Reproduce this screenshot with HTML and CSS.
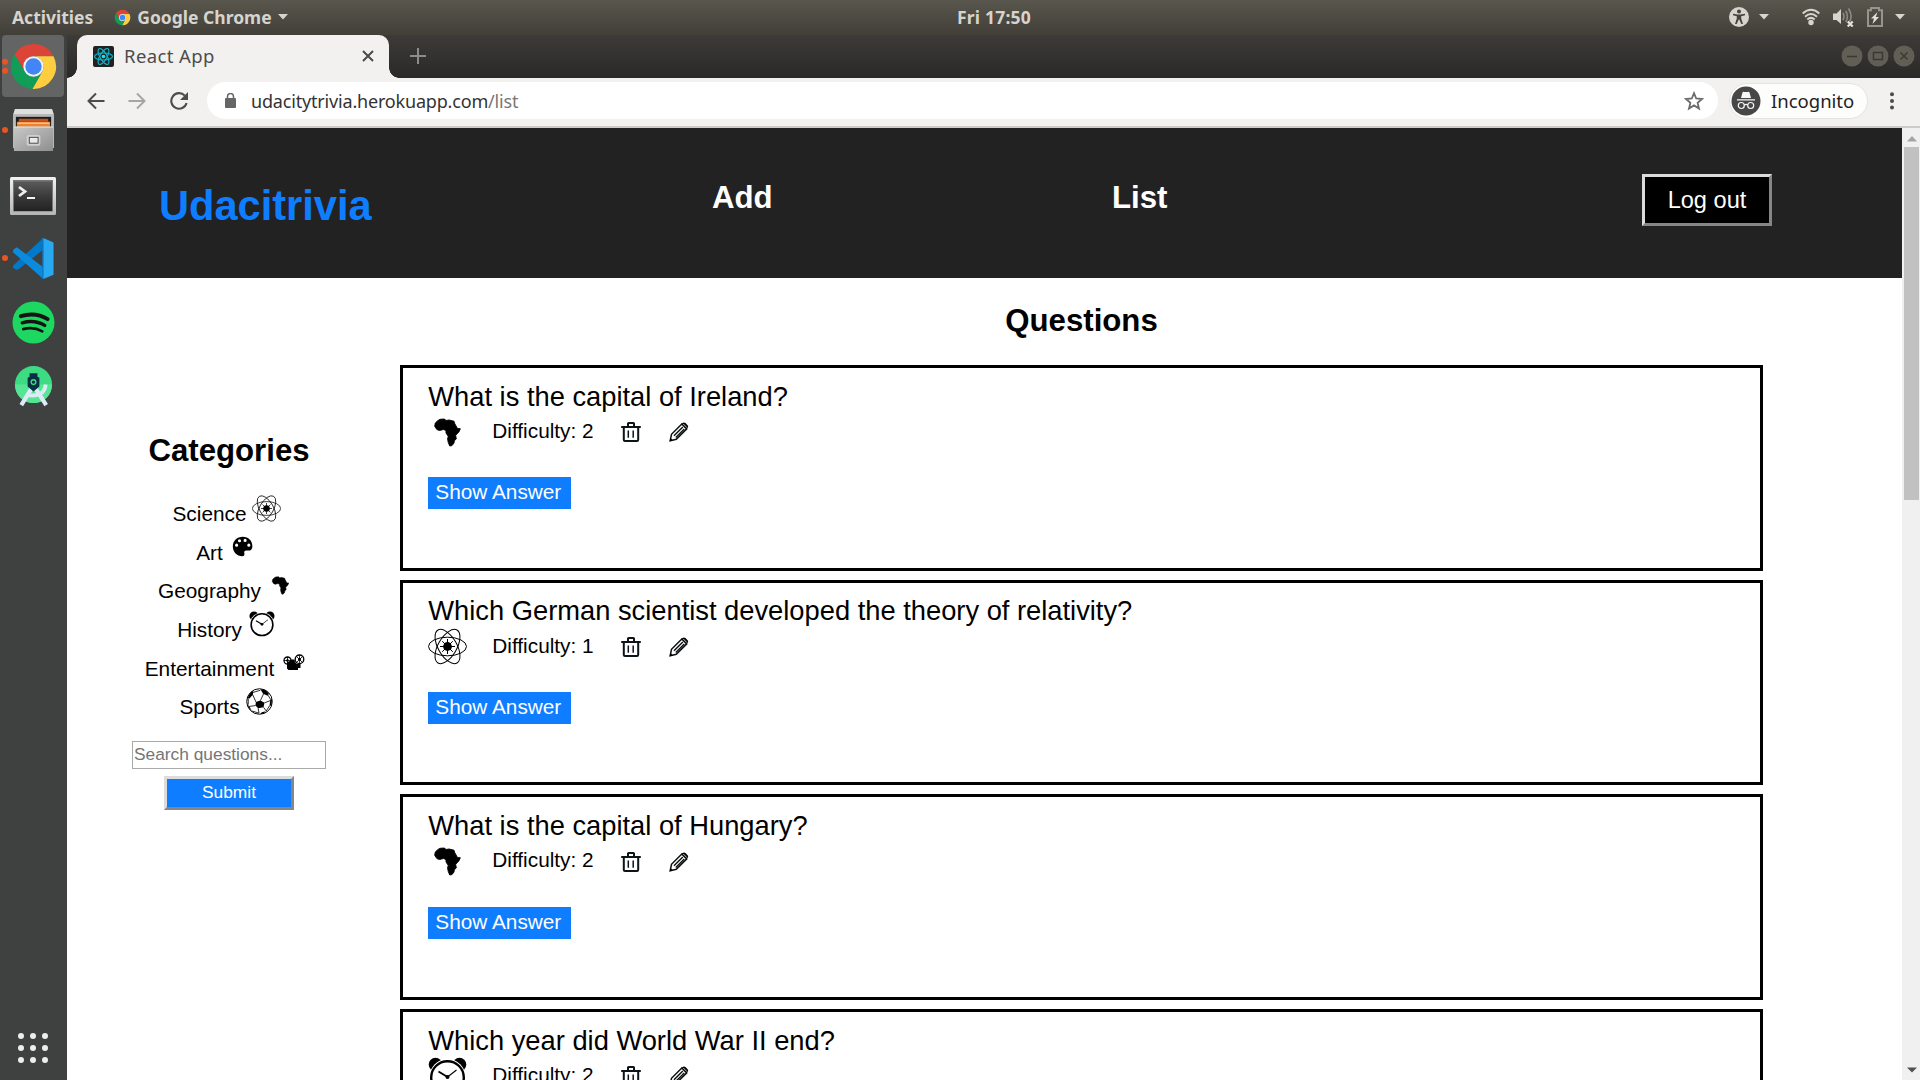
FILE: index.html
```html
<!DOCTYPE html>
<html lang="en">
<head>
<meta charset="utf-8">
<title>React App</title>
<link rel="stylesheet" href="styles.css">
</head>
<body>
<svg class="sprite" aria-hidden="true">
  <defs>
    <linearGradient id="steel" x1="0" y1="0" x2="1" y2="1"><stop offset="0" stop-color="#c9c9c9"/><stop offset="1" stop-color="#8e8e8e"/></linearGradient>
    <linearGradient id="screen" x1="0" y1="0" x2="0" y2="1"><stop offset="0" stop-color="#5a5a5a"/><stop offset=".5" stop-color="#3a3a3a"/><stop offset="1" stop-color="#222"/></linearGradient>
    <linearGradient id="frame" x1="0" y1="0" x2="0" y2="1"><stop offset="0" stop-color="#f2f2f2"/><stop offset="1" stop-color="#b5b5b5"/></linearGradient>
  </defs>
  <symbol id="chrome" viewBox="0 0 48 48">
    <path fill="#db4437" d="M5.54 12.03A22 22 0 0 1 43.6 14H24A10 10 0 0 0 15.34 29Z"/>
    <path fill="#ffcd40" d="M43.6 14A22 22 0 0 1 22.86 45.97L32.66 29A10 10 0 0 0 24 14Z"/>
    <path fill="#0f9d58" d="M22.86 45.97A22 22 0 0 1 5.54 12.03L15.34 29A10 10 0 0 0 32.66 29Z"/>
    <circle cx="24" cy="24" r="10" fill="#f1f1f1"/><circle cx="24" cy="24" r="8" fill="#4285f4"/>
  </symbol>
  <symbol id="caret" viewBox="0 0 10 6"><path fill="#d6d4ce" d="M0 0H10L5 5.5Z"/></symbol>
  <symbol id="atom" viewBox="0 0 39 39">
    <g fill="none" stroke="#000" stroke-width="1">
      <ellipse cx="19.5" cy="19.5" rx="19" ry="9.3"/>
      <ellipse cx="19.5" cy="19.5" rx="19" ry="9.3" transform="rotate(60 19.5 19.5)"/>
      <ellipse cx="19.5" cy="19.5" rx="19" ry="9.3" transform="rotate(120 19.5 19.5)"/>
      <path d="M19.5 12v15M12 19.500h15M14.200 14.200l10.600 10.600M14.200 24.800l10.600-10.600"/>
    </g>
    <circle cx="19.5" cy="19.5" r="4.4"/>
  </symbol>
  <symbol id="palette" viewBox="0 0 39 39">
    <path fill-rule="evenodd" d="M20 6.5C12 6.500 6.500 12 6.500 19.500C6.500 27 12 32.500 19 32.500C22 32.500 22.500 31 22 29C21.400 26.500 22 25 25 25H27.500C31 25 32.800 22.500 32.800 19C32.800 12 27.500 6.500 20 6.500ZM11.600 15.600a2.100 2.100 0 1 1 0 4.200a2.100 2.100 0 1 1 0-4.200ZM15.500 9.600a2.100 2.100 0 1 1 0 4.200a2.100 2.100 0 1 1 0-4.200ZM23 9.200a2.100 2.100 0 1 1 0 4.200a2.100 2.100 0 1 1 0-4.200ZM28 15.600a2.100 2.100 0 1 1 0 4.200a2.100 2.100 0 1 1 0-4.200Z"/>
  </symbol>
  <symbol id="africa" viewBox="0 0 39 39">
    <path stroke="#000" stroke-width=".9" stroke-linejoin="round" d="M12 6.300L16.500 6L18 7.500L21 7L26 8.200L26.800 10.800L29.500 15.500L32.300 15.700L31 18.800L27.700 22.300L28.300 26L26.300 27.700L26 30L24 32.600L21.700 33L20.200 29.300L19.600 26L20.200 23.300L18 20V17.600L15.500 16.500L11.500 17.500L8.900 16.600L6.700 13.300L7.300 10L9.700 7.700Z"/>
  </symbol>
  <symbol id="clock" viewBox="0 0 39 39">
    <circle cx="7.500" cy="7.500" r="6.800"/><circle cx="31.500" cy="7.500" r="6.800"/>
    <circle cx="19.500" cy="20" r="18" fill="#fff"/>
    <circle cx="19.500" cy="20.500" r="16.300" fill="#fff" stroke="#000" stroke-width="2.400"/>
    <path d="M10.500 14.500L19.500 20" fill="none" stroke="#000" stroke-width="1.900"/>
    <path d="M28.500 13L19.500 20" fill="none" stroke="#000" stroke-width="1.100"/>
    <circle cx="19.500" cy="20" r="2"/>
  </symbol>
  <symbol id="camera" viewBox="0 0 22 17">
    <circle cx="4.500" cy="6.500" r="3.500" fill="#fff" stroke="#000" stroke-width="1.300"/>
    <circle cx="16.500" cy="5.300" r="4.300" fill="#fff" stroke="#000" stroke-width="1.300"/>
    <path stroke="#000" stroke-width=".8" d="M4.500 3v7M1 6.500h7M16.500 1.300v8M13.500 2.500l6 6M19.500 2.500l-6 6"/>
    <circle cx="4.500" cy="6.500" r="1.300"/><circle cx="16.500" cy="5.300" r="1.500"/>
    <path d="M4 8.500L6 7.500L8.500 5.500H11.500L12 8L14 10H17.500V14H15V16H5.500L4 14.500Z"/>
  </symbol>
  <symbol id="ball" viewBox="0 0 30 30">
    <circle cx="15" cy="15" r="14.200" fill="#fff" stroke="#000" stroke-width="1.100"/>
    <path d="M11 15.500L16 14L20.500 16.500L19.500 21.500L13.500 22.500L10.500 19.500Z"/>
    <path d="M16 1.500L22 2.500L25.500 6.500L24 8.500L19 6.500ZM2 11C2.800 7.500 5 4.500 8 3L7.700 7.500L3.500 12ZM27 13L29 12.500L28.300 19L26 20.500ZM1.500 18.500L3.500 20L6.500 25.500L3.500 22.500ZM17.500 27L22 25.800L19.500 28.500L16 28.800Z"/>
    <path fill="none" stroke="#000" stroke-width=".9" d="M16 14L19.500 6.500M20.500 16.500L27 14M11 15.500L7.500 7.500M7.500 5L16 2.500M10.500 19.500L3.500 20.500M13.500 22.500L14.500 28M19.500 21.500L22.500 25.500M2.500 12L2.500 18.500M24.500 8L27.500 13M6.500 25.500L14.500 28M26 20L22.500 25.500"/>
  </symbol>
  <symbol id="trash" viewBox="0 0 20 20">
    <path fill="none" stroke="#0c1418" stroke-width="2" d="M.2 4.900H19.800M7 4.500V1.600Q7 1 7.600 1H12.400Q13 1 13 1.600V4.500M2.800 5V17.800Q2.800 19 4 19H16Q17.200 19 17.200 17.800V5"/>
    <path stroke="#0c1418" stroke-width="1.500" d="M7.300 8.500V15.800M12.200 8.500V15.800"/>
  </symbol>
  <symbol id="pencil" viewBox="0 0 20 20">
    <path fill="none" stroke="#0c1010" stroke-width="1.500" d="M1.200 18.700L2.500 12.300L12.800 2L17.700 6.900L7.300 17.200Z"/>
    <path fill="none" stroke="#0c1010" stroke-width="1.400" d="M5 13.800L13.800 5M6.800 15.400L15.300 6.900"/>
    <path d="M.7 19.200L1.300 15.800L4.100 18.600ZM13.200 1.300Q14.800-.2 16.500 1L18.800 3.400Q19.800 5 18.300 6.300L17.600 7L12.600 2Z"/>
    <path stroke="#fff" stroke-width=".8" d="M14.300 2L17.900 5.600"/>
  </symbol>
</svg>

<div class="desktop">
  <div class="topbar">
    <div class="topbar-left">
      <span class="activities">Activities</span>
      <svg class="topbar-logo"><use href="#chrome"/></svg>
      <span class="app-name">Google Chrome</span>
      <svg class="caret"><use href="#caret"/></svg>
    </div>
    <span class="time">Fri 17:50</span>
    <div class="topbar-right">
      <svg class="access" viewBox="0 0 20 20"><circle cx="10" cy="10" r="10" fill="#d6d4ce"/><circle cx="10" cy="4.600" r="2" fill="#45433c"/><path fill="#45433c" d="M4 6.800L8.500 7.400H11.500L16 6.800V8.300L12.200 9.200V11.500L14 17H12.300L10.300 12.500H9.700L7.700 17H6L7.800 11.500V9.200L4 8.300Z"/></svg>
      <svg class="caret"><use href="#caret"/></svg>
      <svg class="wifi" viewBox="0 0 18 18"><g fill="none" stroke="#d6d4ce" stroke-width="2"><path d="M.7 5.500Q9-2 17.300 5.500"/><path d="M3 8.700Q9 3.200 15 8.700"/><path d="M5.300 11.500Q9 8.300 12.700 11.500"/></g><circle cx="9" cy="14.500" r="2.700" fill="#d6d4ce"/></svg>
      <svg class="volume" viewBox="0 0 21 20"><path fill="#d6d4ce" d="M0 6.500H3.500L8 2V17L3.500 13H0Z"/><g fill="none" stroke="#8c8a83" stroke-width="1.600"><path d="M10 6Q12 9.500 10 13M12.800 4Q16 9.500 12.800 15M15.500 1.500Q20.500 9.500 16 15"/></g><path stroke="#e4e2dc" stroke-width="2.200" d="M14.700 14.500L19.700 19.500M19.700 14.500L14.700 19.500"/></svg>
      <svg class="battery" viewBox="0 0 16 20"><path fill="none" stroke="#96948d" stroke-width="2" d="M1 3.200H4V1H12V3.200H15V19H1Z"/><path fill="#e4e2dc" d="M10.500 5L4 11.500H7L5.500 17L12 10H8.800Z"/></svg>
      <svg class="caret"><use href="#caret"/></svg>
    </div>
  </div>

  <div class="workspace">
    <nav class="dock">
      <div class="dock-item active"><span class="dots"><i></i><i></i></span><svg class="dock-chrome"><use href="#chrome"/></svg></div>
      <div class="dock-item"><span class="dots"><i></i></span>
        <svg class="dock-icon" viewBox="0 0 44 44"><path fill="#b9b9b9" d="M3 1H41L43 6V40H1V6Z"/><path fill="#dedede" d="M3 0H41L42.500 5H1.500Z"/><rect x="4" y="8" width="36" height="12" fill="#1d1d1d"/><path fill="#c8501e" d="M7 10H37V13H7Z"/><path fill="#f0822d" d="M5 13H39V19H5Z"/><path stroke="#fbe3c0" d="M6 14.500H38"/><rect x="2" y="18" width="40" height="25" fill="url(#steel)"/><path stroke="#e6e6e6" d="M2 18.500H42"/><rect x="15" y="26.500" width="14" height="11" rx="2" fill="#d0d0d0"/><rect x="17.700" y="29" width="9" height="6" fill="#e9e9e9" stroke="#4a4a4a"/></svg></div>
      <div class="dock-item">
        <svg class="dock-terminal" viewBox="0 0 46 38"><rect width="46" height="38" rx="1.500" fill="url(#frame)"/><rect x="3" y="3" width="40" height="31.500" fill="#777"/><rect x="4" y="4.500" width="38" height="29.500" fill="url(#screen)"/><path fill="none" stroke="#eee" stroke-width="2.800" d="M9 10L15 14.500L9 19"/><path fill="#f4f4f4" d="M17 20H25V22H17Z"/></svg></div>
      <div class="dock-item"><span class="dots"><i></i></span>
        <svg class="dock-icon" viewBox="0 0 44 44"><path fill="#0179cb" d="M1 29.500L32 1V13L6 33.500Q4 34 1 31.500Z"/><path fill="#0a8bdc" d="M1 14.500Q1 12.500 5 10.500L32 31V43L1 15.500Z"/><path fill="#2aa9f3" d="M32 1L42.500 5.500V38.500L32 43Z"/><path fill="#0d78c1" d="M31 1H32V43H31Z"/></svg></div>
      <div class="dock-item">
        <svg class="dock-icon" viewBox="0 0 44 44"><circle cx="22" cy="22" r="21.500" fill="#1ed760"/><g fill="none" stroke="#141414" stroke-linecap="round"><path stroke-width="4" d="M9 15.500Q24 11 36.500 18.500"/><path stroke-width="3.400" d="M10.500 22.300Q23 18.700 33.500 25"/><path stroke-width="2.700" d="M11.500 28.800Q22 26 31 31"/></g></svg></div>
      <div class="dock-item">
        <svg class="dock-icon" viewBox="0 0 44 44"><circle cx="22" cy="20" r="19" fill="#3ddc84"/><path fill="#55e594" d="M3 20A19 19 0 0 0 41 20Z"/><path fill="none" stroke="#dcebf5" stroke-width="4.300" d="M20 24L9.500 41M24 24L35 41"/><path fill="none" stroke="#dcebf5" stroke-width="4" d="M14 30.500Q33 34 34.500 20"/><path fill="#083042" d="M18 8.500H26V12L28 13V22L22 27L16 22V13L18 12Z"/><circle cx="22" cy="17.500" r="2.400" fill="none" stroke="#3ddc84" stroke-width="1.400"/></svg></div>
      <div class="apps"><i></i><i></i><i></i><i></i><i></i><i></i><i></i><i></i><i></i></div>
    </nav>

    <div class="browser">
      <div class="tabstrip">
        <div class="tab">
          <svg class="favicon" viewBox="0 0 21 21"><rect width="21" height="21" rx="2" fill="#222"/><g fill="none" stroke="#12b5cb" stroke-width="1.200"><ellipse cx="10.500" cy="10.500" rx="9" ry="3.500"/><ellipse cx="10.500" cy="10.500" rx="9" ry="3.500" transform="rotate(60 10.500 10.500)"/><ellipse cx="10.500" cy="10.500" rx="9" ry="3.500" transform="rotate(120 10.500 10.500)"/></g><circle cx="10.500" cy="10.500" r="1.800" fill="#1de2f4"/></svg>
          <span class="tab-title">React App</span>
          <svg class="tab-close" viewBox="0 0 12 12"><path stroke="#4a4a4a" stroke-width="2" d="M1 1L11 11M11 1L1 11"/></svg>
        </div>
        <svg class="tab-new" viewBox="0 0 16 16"><path stroke="#8d8c89" stroke-width="2" d="M8 0V16M0 8H16"/></svg>
        <div class="window-buttons">
          <svg viewBox="0 0 22 22"><circle cx="11" cy="11" r="10.500"/><path d="M6 11.500H16"/></svg>
          <svg viewBox="0 0 22 22"><circle cx="11" cy="11" r="10.500"/><path d="M6.500 7.500H15.500V14.500H6.500Z"/></svg>
          <svg viewBox="0 0 22 22"><circle cx="11" cy="11" r="10.500"/><path d="M7.500 7.500L14.500 14.500M14.500 7.500L7.500 14.500"/></svg>
        </div>
      </div>
      <div class="toolbar">
        <svg class="tool back" viewBox="0 0 18 18"><path fill="none" stroke="#4c4c4c" stroke-width="2" d="M17.500 9H2M9 1.500L1.500 9L9 16.500"/></svg>
        <svg class="tool" viewBox="0 0 18 18"><path fill="none" stroke="#a6a5a3" stroke-width="2" d="M.5 9H16M9 1.500L16.500 9L9 16.500"/></svg>
        <svg class="tool" viewBox="0 0 18 18"><path fill="none" stroke="#4c4c4c" stroke-width="2.100" d="M14.800 3.600A7.800 7.800 0 1 0 16.600 11"/><path fill="#4c4c4c" d="M18 0V8H10Z"/></svg>
        <div class="omnibox">
          <svg class="lock" viewBox="0 0 11 15"><rect y="5" width="11" height="10" rx="1" fill="#666"/><path fill="none" stroke="#666" stroke-width="1.500" d="M2.500 6V3.500a3 3 0 0 1 6 0V6"/></svg>
          <span class="url">udacitytrivia.herokuapp.com<span class="path">/list</span></span>
          <svg class="star" viewBox="0 0 20 20"><path fill="none" stroke="#6c6c6c" stroke-width="1.800" d="M10 2.200L12.200 7.500L18 8L13.600 11.800L15 17.500L10 14.400L5 17.500L6.400 11.800L2 8L7.800 7.500Z"/></svg>
        </div>
        <div class="incognito">
          <svg viewBox="0 0 30 30"><circle cx="15" cy="15" r="14.500" fill="#474747"/><path fill="#f7f7f7" d="M10 12L11.500 6.500Q12 5.300 13.200 6H16.800Q18 5.300 18.500 6.500L20 12ZM6 13.300H24V14.500H6Z"/><g fill="none" stroke="#f7f7f7" stroke-width="1.200"><circle cx="10.300" cy="19.500" r="3"/><circle cx="19.700" cy="19.500" r="3"/><path d="M13.300 19Q15 17.800 16.700 19"/></g></svg>
          <span>Incognito</span>
        </div>
        <svg class="menu" viewBox="0 0 4 18"><circle cx="2" cy="2.300" r="2"/><circle cx="2" cy="9" r="2"/><circle cx="2" cy="15.600" r="2"/></svg>
      </div>

      <div class="viewport">
        <div class="page">
          <header class="app-header">
            <h1>Udacitrivia</h1>
            <h2 class="nav-add">Add</h2>
            <h2 class="nav-list">List</h2>
            <button class="logout">Log out</button>
          </header>
          <main class="content">
            <aside class="sidebar">
              <h2>Categories</h2>
              <ul>
                <li>Science<span class="cat"><svg class="s29"><use href="#atom"/></svg></span></li>
                <li>Art<span class="cat"><svg class="s29"><use href="#palette"/></svg></span></li>
                <li>Geography<span class="cat"><svg class="s25"><use href="#africa"/></svg></span></li>
                <li>History<span class="cat"><svg class="s26"><use href="#clock"/></svg></span></li>
                <li>Entertainment<span class="cat"><svg class="film"><use href="#camera"/></svg></span></li>
                <li>Sports<span class="cat"><svg class="s27"><use href="#ball"/></svg></span></li>
              </ul>
              <input class="search" type="text" placeholder="Search questions...">
              <button class="submit">Submit</button>
            </aside>
            <section class="questions">
              <h2>Questions</h2>
              <article class="question">
                <p class="text">What is the capital of Ireland?</p>
                <div class="status"><svg class="s39"><use href="#africa"/></svg><span class="difficulty">Difficulty: 2</span><svg class="s20 trash"><use href="#trash"/></svg><svg class="s20"><use href="#pencil"/></svg></div>
                <div class="show">Show Answer</div>
              </article>
              <article class="question">
                <p class="text">Which German scientist developed the theory of relativity?</p>
                <div class="status"><svg class="s39"><use href="#atom"/></svg><span class="difficulty">Difficulty: 1</span><svg class="s20 trash"><use href="#trash"/></svg><svg class="s20"><use href="#pencil"/></svg></div>
                <div class="show">Show Answer</div>
              </article>
              <article class="question">
                <p class="text">What is the capital of Hungary?</p>
                <div class="status"><svg class="s39"><use href="#africa"/></svg><span class="difficulty">Difficulty: 2</span><svg class="s20 trash"><use href="#trash"/></svg><svg class="s20"><use href="#pencil"/></svg></div>
                <div class="show">Show Answer</div>
              </article>
              <article class="question">
                <p class="text">Which year did World War II end?</p>
                <div class="status"><svg class="s39"><use href="#clock"/></svg><span class="difficulty">Difficulty: 2</span><svg class="s20 trash"><use href="#trash"/></svg><svg class="s20"><use href="#pencil"/></svg></div>
                <div class="show">Show Answer</div>
              </article>
            </section>
          </main>
        </div>
        <div class="scrollbar">
          <svg viewBox="0 0 10 6"><path fill="#a3a3a3" d="M0 5.500L5 0L10 5.500Z"/></svg>
          <div class="thumb"></div>
          <svg class="down" viewBox="0 0 10 6"><path fill="#505050" d="M0 .5H10L5 5.500Z"/></svg>
        </div>
      </div>
    </div>
  </div>
</div>
</body>
</html>
```
FILE: styles.css
```css
* { box-sizing: border-box; }
html, body { margin: 0; height: 100%; overflow: hidden; }
body { font-family: "Liberation Sans", Arial, sans-serif; font-size: 20.8px; color: #000; }
h1, h2, p, ul { margin: 0; padding: 0; }
svg { display: block; flex: none; }
.sprite { position: absolute; width: 0; height: 0; }

.desktop { display: flex; flex-direction: column; width: 1920px; height: 1080px; overflow: hidden; }

/* system bar */
.topbar { display: grid; grid-template-columns: 945px auto 1fr; align-items: center; flex: none; height: 35px; padding: 0 15px 1px 12px; background: linear-gradient(#59564d, #413f38); color: #d6d4ce; font: bold 17.5px/32px "Noto Sans", sans-serif; }
.topbar-left, .topbar-right { display: flex; align-items: center; }
.activities, .app-name, .time { margin-top: -1px; }
.topbar-logo { width: 17px; height: 17px; margin: 0 6px 0 21px; }
.caret { width: 10px; height: 6px; }
.topbar-left .caret { margin-left: 6px; }
.time { letter-spacing: .2px; }
.topbar-right { justify-content: flex-end; }
.access { width: 20px; height: 20px; margin-right: 10px; }
.wifi { width: 18px; height: 18px; margin-left: 33px; }
.volume { width: 21px; height: 20px; margin-left: 13px; }
.battery { width: 16px; height: 20px; margin: 0 12px 0 13px; }

.workspace { display: flex; flex: 1; min-height: 0; }

/* launcher */
.dock { display: flex; flex-direction: column; flex: none; width: 67px; background: #3f4140; padding-right: 1px; }
.dock-item { position: relative; display: flex; align-items: center; justify-content: center; height: 62px; margin-bottom: 2px; flex: none; }
.dock-item.active { margin-left: 2px; margin-right: 2px; border-radius: 4px; background: #636564; }
.dock-icon { width: 43px; height: 43px; }
.dock-terminal { width: 46px; height: 38px; margin-top: 3px; }
.dock-chrome { width: 49px; height: 49px; }
.dots { position: absolute; left: 2px; top: 50%; display: grid; gap: 2.500px; transform: translateY(-50%); }
.active .dots { left: 0; }
.dots i { width: 6px; height: 6px; border-radius: 50%; background: #e95420; }
.apps { display: grid; grid-template-columns: repeat(3, 6px); gap: 6px; margin: auto auto 17px; }
.apps i { height: 6px; border-radius: 50%; background: #eeeeec; }

/* browser chrome */
.browser { display: flex; flex-direction: column; flex: 1; min-width: 0; font-family: "Noto Sans", sans-serif; }
.tabstrip { display: flex; align-items: center; height: 43px; flex: none; padding: 0 5px 1px 10px; background: linear-gradient(#3c3b38, #2a2927); }
.tab { position: relative; display: flex; align-items: center; align-self: flex-start; width: 312px; height: 43px; padding: 0 15px 1px 16px; border-radius: 10px 10px 0 0; background: #f2f1f0; }
.tab::before, .tab::after { content: ""; position: absolute; bottom: 0; width: 10px; height: 10px; }
.tab::before { left: -10px; background: radial-gradient(circle at 0 0, transparent 9.500px, #f2f1f0 10px); }
.tab::after { right: -10px; background: radial-gradient(circle at 100% 0, transparent 9.500px, #f2f1f0 10px); }
.favicon { width: 21px; height: 21px; }
.tab-title { flex: 1; margin: -1px 0 0 10px; font-size: 18.5px; color: #4c4c4c; letter-spacing: .4px; }
.tab-close { width: 12px; height: 12px; }
.tab-new { width: 16px; height: 16px; margin-left: 21px; }
.window-buttons { display: flex; gap: 4px; margin-left: auto; }
.window-buttons svg { width: 22px; height: 22px; fill: #605e55; stroke: #3a3934; stroke-width: 1.500; }
.window-buttons circle { stroke: none; }
.toolbar { display: flex; align-items: center; flex: none; height: 50px; padding: 0 26px 3px 20px; background: #f2f1f0; border-bottom: 2px solid #cccbca; }
.tool { width: 18px; height: 18px; margin-right: 23px; }
.back + .tool { margin-right: 24px; }
.back + .tool + .tool { margin-right: 19px; }
.omnibox { display: flex; align-items: center; flex: 1; height: 37px; padding: 0 14px 0 18px; border-radius: 19px; background: #fff; }
.lock { width: 11px; height: 15px; }
.url { flex: 1; margin-left: 15px; font-size: 18px; letter-spacing: -.18px; color: #333; }
.path { color: #777; }
.star { width: 20px; height: 20px; }
.incognito { display: flex; align-items: center; gap: 10px; width: 139px; height: 36px; margin: 0 22px 0 11px; padding-left: 1px; border: 1px solid #e4e3e2; border-radius: 18px; background: #fdfdfc; font-size: 18.5px; color: #222; }
.incognito svg { width: 30px; height: 30px; }
.menu { width: 4px; height: 18px; fill: #4c4c4c; }

/* page */
.viewport { display: flex; flex: 1; min-height: 0; font-family: "Liberation Sans", Arial, sans-serif; }
.page { flex: 1; min-width: 0; overflow: hidden; background: #fff; }
.app-header { display: grid; grid-template-columns: 553px 400px 1fr auto; align-items: start; height: 150px; padding: 46px 130px 0 92px; background: #222; color: #fff; }
h1 { font-size: 41.6px; line-height: 48px; color: #0e7dff; margin-top: 8px; }
h2 { font-size: 31.2px; line-height: 36px; }
.app-header h2 { margin-top: 6px; }
.logout { width: 130px; height: 52px; padding: 0; border: 3px solid; border-color: #dcdcdc #868686 #868686 #dcdcdc; background: #000; color: #fff; font: 23.6px "Liberation Sans", Arial, sans-serif; }
.content { display: flex; }
.sidebar { display: flex; flex-direction: column; align-items: center; flex: none; width: 194px; margin: 155px 74px 0 65px; }
.sidebar ul { align-self: stretch; list-style: none; margin-top: 26px; }
.sidebar li { display: flex; align-items: center; justify-content: center; gap: 5.500px; height: 38.600px; padding-right: 4.500px; }
.cat { display: grid; place-items: center; width: 29px; height: 29px; margin-top: -12px; }
.s29 { width: 29px; height: 29px; }
.s27 { width: 27px; height: 27px; }
.s26 { width: 26px; height: 26px; }
.s25 { width: 25px; height: 25px; }
.film { width: 22px; height: 17px; }
.search { width: 194px; height: 28px; margin-top: 14px; padding: 0 1px; border: 1px solid #a9a9a9; font: 17.33px "Liberation Sans", Arial, sans-serif; }
.search::placeholder { color: #757575; }
.submit { width: 130px; height: 34px; margin-top: 7px; padding: 0 0 1px; border: 3px solid; border-color: #dcdcdc #868686 #868686 #dcdcdc; background: #0e7dff; color: #fff; font: 17.33px "Liberation Sans", Arial, sans-serif; }
.questions { flex: none; width: 1363px; padding-top: 25px; }
.questions h2 { margin-bottom: 26px; text-align: center; }
.question { height: 205.700px; margin-bottom: 8.970px; padding: 12.700px 0 0 25.300px; border: 3px solid #000; }
.text { font-size: 27.3px; line-height: 32px; }
.status { display: flex; align-items: center; height: 39px; }
.s39 { width: 39px; height: 39px; }
.s20 { width: 20px; height: 20px; }
.difficulty { width: 129px; margin-left: 25px; margin-top: -2.200px; }
.trash { margin-right: 28px; }
.show { width: 143px; height: 32px; margin-top: 25.500px; padding-left: 7px; background: #0e7dff; color: #fff; line-height: 30px; }
.scrollbar { display: flex; flex-direction: column; align-items: center; flex: none; width: 18px; padding: 8px 1px 7px 2px; background: #f0f0f0; }
.scrollbar svg { width: 10px; height: 6px; }
.thumb { width: 15px; height: 353px; margin-top: 5px; background: #c1c1c1; }
.down { margin-top: auto; }
```
